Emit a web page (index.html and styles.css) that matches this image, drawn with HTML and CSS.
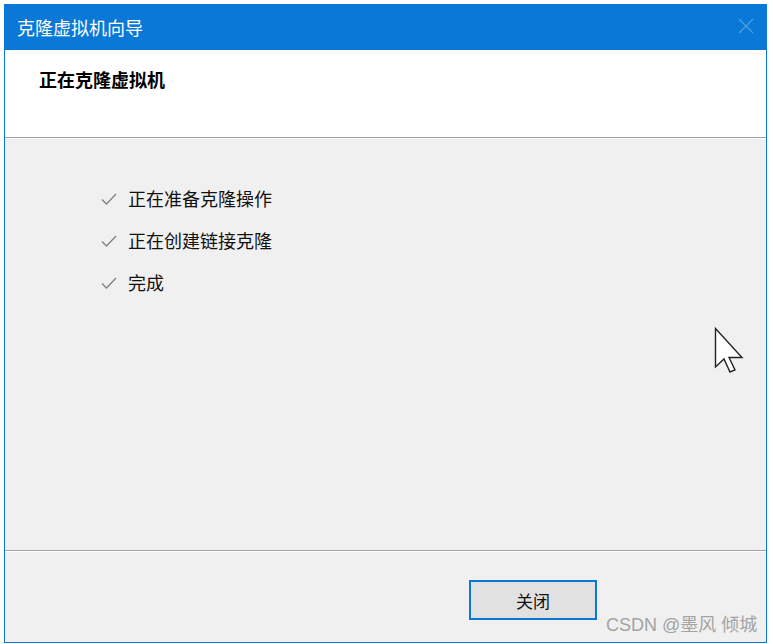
FILE: index.html
```html
<!DOCTYPE html>
<html lang="zh-CN">
<head>
<meta charset="utf-8">
<title>克隆虚拟机向导</title>
<link rel="stylesheet" href="styles.css">
</head>
<body>
<div class="window">
  <div class="titlebar">
    <span class="title">克隆虚拟机向导</span>
    <svg class="close" width="16" height="16" viewBox="0 0 16 16"><path d="M1 1 L15 15 M15 1 L1 15" stroke="#4f9fe3" stroke-width="1.2" fill="none"/></svg>
  </div>
  <div class="header">
    <div class="heading">正在克隆虚拟机</div>
  </div>
  <div class="content">
    <ul class="steps">
      <li class="step"><svg class="check" width="16" height="14" viewBox="0 0 16 14"><path d="M1 7.5 L5.5 12 L15 2" stroke="#808080" stroke-width="1.3" fill="none"/></svg><span>正在准备克隆操作</span></li>
      <li class="step"><svg class="check" width="16" height="14" viewBox="0 0 16 14"><path d="M1 7.5 L5.5 12 L15 2" stroke="#808080" stroke-width="1.3" fill="none"/></svg><span>正在创建链接克隆</span></li>
      <li class="step"><svg class="check" width="16" height="14" viewBox="0 0 16 14"><path d="M1 7.5 L5.5 12 L15 2" stroke="#808080" stroke-width="1.3" fill="none"/></svg><span>完成</span></li>
    </ul>
  </div>
  <div class="footer">
    <button class="btn">关闭</button>
  </div>
</div>
<svg class="cursor" width="32" height="48" viewBox="0 0 32 48"><path d="M1.5 1.5 L1.5 40 L10 32 L16 45 L21 43 L15 30.5 L28 30.5 Z" fill="#ffffff" stroke="#222222" stroke-width="1.4" stroke-linejoin="miter"/></svg>
<div class="watermark">CSDN @墨风 倾城</div>
</body>
</html>
```
FILE: styles.css
```css
html, body {
  margin: 0;
  padding: 0;
  background: #ffffff;
}
body {
  position: relative;
  width: 773px;
  height: 644px;
  overflow: hidden;
  font-family: "Noto Sans CJK SC", "Noto Sans", sans-serif;
  color: #000;
}
.window {
  margin: 4px 0 0 4px;
  width: 763px;
  height: 639px;
  box-sizing: border-box;
  border: 1px solid #0a78d6;
  display: flex;
  flex-direction: column;
  background: #f0f0f0;
}
.titlebar {
  height: 45px;
  flex: none;
  background: #0a78d6;
  display: flex;
  align-items: center;
  justify-content: space-between;
  padding: 0 12px 2px 12px;
  box-sizing: border-box;
}
.title {
  color: #ffffff;
  font-size: 18px;
  line-height: 24px;
}
.close {
  margin-top: -2px;
}
.header {
  height: 88px;
  flex: none;
  background: #ffffff;
  border-bottom: 1px solid #a0a0a0;
  box-sizing: border-box;
  padding: 17px 0 0 34px;
}
.heading {
  font-weight: bold;
  font-size: 18px;
  line-height: 24px;
}
.content {
  flex: 1;
  border-top: 1px solid #ffffff;
  border-bottom: 1px solid #a0a0a0;
  padding-top: 38px;
}
.steps {
  list-style: none;
  margin: 0;
  padding: 0 0 0 96px;
}
.step {
  display: flex;
  align-items: center;
  height: 42px;
  font-size: 18px;
  color: #111;
}
.check {
  margin-right: 11px;
  margin-top: 1px;
}
.footer {
  height: 91px;
  flex: none;
  border-top: 1px solid #ffffff;
  box-sizing: border-box;
  display: flex;
  justify-content: flex-end;
  align-items: flex-start;
  padding: 28px 169px 0 0;
}
.btn {
  width: 128px;
  height: 40px;
  box-sizing: border-box;
  border: 2px solid #0a78d6;
  background: #e1e1e1;
  font-family: "Noto Sans CJK SC", sans-serif;
  font-size: 17px;
  color: #111;
  padding: 0;
}
.cursor {
  position: absolute;
  left: 714px;
  top: 327px;
}
.watermark {
  position: absolute;
  left: 606px;
  top: 614px;
  font-family: "Liberation Sans", "Noto Sans CJK SC", sans-serif;
  font-size: 18px;
  line-height: 22px;
  color: #a3a3a3;
  white-space: nowrap;
}
```
